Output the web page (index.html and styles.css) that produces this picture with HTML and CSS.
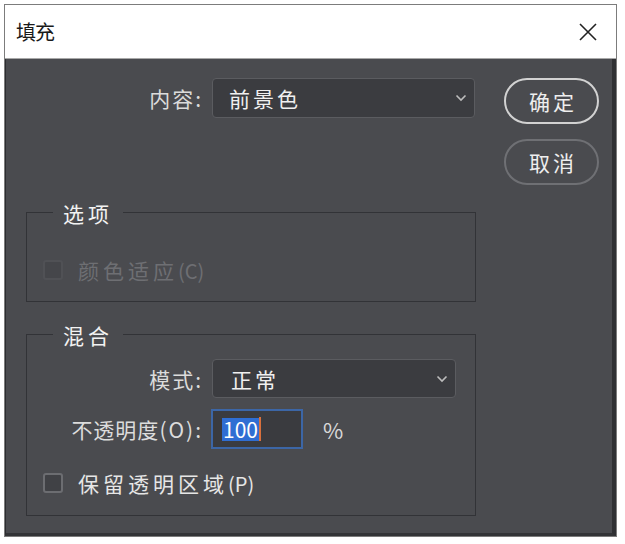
FILE: index.html
```html
<!DOCTYPE html>
<html lang="zh">
<head>
<meta charset="utf-8">
<title>填充</title>
<link rel="stylesheet" href="styles.css">
</head>
<body>
<div class="window">
  <div class="titlebar">
    <span class="title">填充</span>
    <svg class="close" width="20" height="20" viewBox="0 0 20 20"><path d="M2 2 L18 18 M18 2 L2 18" stroke="#222" stroke-width="1.6" fill="none"/></svg>
  </div>
  <div class="body">
    <div class="main">
      <div class="row row-content">
        <span class="label">内容:</span>
        <div class="select select-wide"><span class="sel-text">前景色</span><svg class="chev" width="12" height="8" viewBox="0 0 12 8"><path d="M1.5 1.5 L6 6 L10.5 1.5" stroke="#bdbdbd" stroke-width="1.6" fill="none"/></svg></div>
      </div>
      <div class="group group-options">
        <span class="group-title">选项</span>
        <div class="check-row disabled">
          <span class="checkbox"></span>
          <span class="check-label">颜色适应<span class="latin">(C)</span></span>
        </div>
      </div>
      <div class="group group-blend">
        <span class="group-title">混合</span>
        <div class="row row-mode">
          <span class="label lbl-g">模式:</span>
          <div class="select select-mode"><span class="sel-text">正常</span><svg class="chev" width="12" height="8" viewBox="0 0 12 8"><path d="M1.5 1.5 L6 6 L10.5 1.5" stroke="#bdbdbd" stroke-width="1.6" fill="none"/></svg></div>
        </div>
        <div class="row row-opacity">
          <span class="label lbl-g">不透明度<span class="latin latin-o">(O):</span></span>
          <div class="num-input"><span class="sel">100</span><span class="caret"></span></div>
          <span class="pct">%</span>
        </div>
        <div class="check-row">
          <span class="checkbox"></span>
          <span class="check-label">保留透明区域<span class="latin">(P)</span></span>
        </div>
      </div>
    </div>
    <div class="buttons">
      <button class="btn btn-primary">确定</button>
      <button class="btn">取消</button>
    </div>
  </div>
</div>
</body>
</html>
```
FILE: styles.css
```css
html, body {
  margin: 0;
  padding: 0;
  background: #ffffff;
}
body {
  font-family: "Noto Sans CJK SC", "Noto Sans", sans-serif;
}
.window {
  margin: 4px 0 0 4px;
  width: 613px;
  height: 533px;
  box-sizing: border-box;
  border: 1px solid #7c7c7c;
  display: flex;
  flex-direction: column;
  background: #4a4b4f;
}
.titlebar {
  height: 54px;
  flex: none;
  background: #ffffff;
  display: flex;
  align-items: center;
  justify-content: space-between;
  padding: 0 18px 0 11px;
  border-bottom: 1px solid #a8a8a8;
  box-sizing: border-box;
}
.title {
  font-size: 20px;
  color: #1a1a1a;
  letter-spacing: -1px;
}
.close { display: block; }
.body {
  flex: 1;
  display: flex;
  padding: 19px 0 0 20px;
  border-right: 4px solid #2f3033;
  border-bottom: 3px solid #333437;
  border-left: 1px solid #2c2d30;
}
.main {
  width: 450px;
  display: flex;
  flex-direction: column;
}
.row {
  display: flex;
  align-items: center;
}
.label {
  width: 177px;
  text-align: right;
  font-size: 21px;
  color: #dcdcdc;
  letter-spacing: 2px;
  margin-right: 9px;
  white-space: nowrap;
}
.lbl-g { width: 176px; }
.latin {
  letter-spacing: 0;
  font-size: 20px;
}
.latin-o { letter-spacing: 2px; font-size: 21px; }
.row-content { height: 40px; }
.select {
  height: 100%;
  box-sizing: border-box;
  background: #3b3c40;
  border: 1px solid #5b5c60;
  border-radius: 4px;
  display: flex;
  align-items: center;
  justify-content: space-between;
  padding: 0 7px 0 16px;
}
.select-wide { width: 263px; }
.select-mode { width: 244px; padding-left: 18px; }
.sel-text {
  font-size: 21px;
  color: #f0f0f0;
  letter-spacing: 3px;
}
.chev { display: block; }
.group {
  border: 1px solid #323337;
  box-sizing: border-box;
  display: flex;
  flex-direction: column;
  align-items: flex-start;
}
.group-options {
  margin-top: 94px;
  height: 90px;
}
.group-blend {
  margin-top: 32px;
  height: 182px;
}
.group-title {
  margin: -14px 0 0 26px;
  padding: 0 10px 0 10px;
  line-height: 28px;
  font-size: 21px;
  color: #f2f2f2;
  letter-spacing: 4px;
  background: #4a4b4f;
}
.check-row {
  display: flex;
  align-items: center;
  height: 28px;
  margin-left: 16px;
}
.group-options .check-row { margin-top: 29px; }
.group-blend .check-row { margin-top: 20px; }
.checkbox {
  width: 16px;
  height: 16px;
  border: 2px solid #6c6d71;
  border-radius: 3px;
  background: #404145;
  margin-right: 15px;
}
.check-label {
  font-size: 21px;
  color: #e6e6e6;
  letter-spacing: 4px;
}
.disabled .checkbox {
  border-color: #505155;
  background: #45464a;
}
.disabled .check-label { color: #6e6f73; }
.row-mode { height: 39px; margin-top: 10px; }
.row-opacity { height: 40px; margin-top: 11px; }
.row-opacity .label { letter-spacing: 1px; margin-right: 8px; }
.num-input {
  width: 92px;
  height: 40px;
  box-sizing: border-box;
  border: 2px solid #3c66a6;
  background: #3a3b3f;
  display: flex;
  align-items: center;
  padding-left: 9px;
}
.sel {
  background: #2f6ed3;
  color: #ffffff;
  font-size: 21px;
  line-height: 23px;
  padding: 0 1px;
}
.caret {
  width: 2px;
  height: 24px;
  background: #d9703c;
}
.pct {
  margin-left: 20px;
  font-size: 22px;
  color: #d8d8d8;
}
.buttons {
  margin-left: 28px;
  display: flex;
  flex-direction: column;
  gap: 15px;
}
.btn {
  width: 95px;
  height: 46px;
  border-radius: 23px;
  background: transparent;
  border: 2px solid #6f7074;
  color: #eeeeee;
  font-family: "Noto Sans CJK SC", sans-serif;
  font-size: 21px;
  letter-spacing: 3px;
  padding: 0 0 0 3px;
}
.btn-primary { border-color: #d2d2d2; }
```
